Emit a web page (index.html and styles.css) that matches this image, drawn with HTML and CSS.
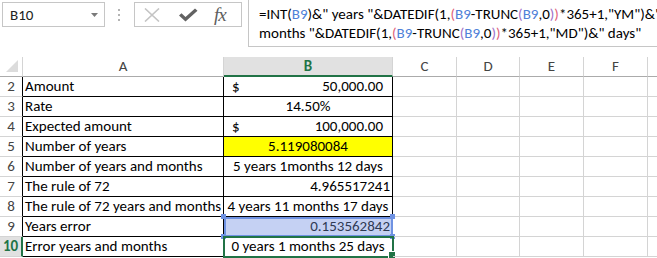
FILE: index.html
```html
<!DOCTYPE html>
<html lang="en">
<head>
    <meta charset="UTF-8">
    <title>Rule of 72</title>
    <link rel="stylesheet" href="styles.css">
</head>
<body>
    <!-- Name box, formula buttons and formula bar -->
    <div class="toolbar">
        <div class="namebox">
            <span>B10</span>
            <svg class="caret" width="7" height="4" viewBox="0 0 7 4"><path d="M0 0h7L3.5 4z" fill="#7a7a7a"/></svg>
        </div>
        <svg class="grip" width="3" height="13" viewBox="0 0 3 13">
            <rect x="0" y="0" width="2" height="2" fill="#b4b4b4"/>
            <rect x="0" y="5" width="2" height="2" fill="#b4b4b4"/>
            <rect x="0" y="10" width="2" height="2" fill="#b4b4b4"/>
        </svg>
        <div class="fxbox">
            <svg class="icon-x" width="16" height="14" viewBox="0 0 16 14"><path d="M1 0.5L15 13.5M15 0.5L1 13.5" stroke="#c4c4c4" stroke-width="1.6" fill="none"/></svg>
            <svg class="icon-check" width="20" height="14" viewBox="0 0 20 14"><path d="M1 7.5L3.5 5.2L7.5 9L17 0.5L19.5 2.8L7.5 13.5z" fill="#626262"/></svg>
            <span class="fx">fx</span>
        </div>
        <div class="formula">
            <div>=INT(<span class="ref">B9</span>)&amp;" years "&amp;DATEDIF(1,<span class="p1">(</span><span class="ref">B9</span>-TRUNC<span class="p2">(</span><span class="ref">B9</span>,0<span class="p2">)</span><span class="p1">)</span>*365+1,"YM")&amp;"</div>
            <div>months "&amp;DATEDIF(1,<span class="p1">(</span><span class="ref">B9</span>-TRUNC<span class="p2">(</span><span class="ref">B9</span>,0<span class="p2">)</span><span class="p1">)</span>*365+1,"MD")&amp;" days"</div>
        </div>
    </div>

    <!-- Worksheet -->
    <div class="sheet">
        <div class="corner"><svg width="12" height="12" viewBox="0 0 12 12"><path d="M12 0V12H0z" fill="#dcdcdc"/></svg></div>
        <div class="colhead">A</div>
        <div class="colhead col-active">B</div>
        <div class="colhead">C</div>
        <div class="colhead">D</div>
        <div class="colhead">E</div>
        <div class="colhead">F</div>
        <div class="colhead last"></div>

        <div class="rowhead">2</div>
        <div class="cell label">Amount</div>
        <div class="cell value acct"><span>$</span><span>50,000.00</span></div>
        <div class="cell"></div><div class="cell"></div><div class="cell"></div><div class="cell"></div><div class="cell last"></div>

        <div class="rowhead">3</div>
        <div class="cell label">Rate</div>
        <div class="cell value center">14.50%</div>
        <div class="cell"></div><div class="cell"></div><div class="cell"></div><div class="cell"></div><div class="cell last"></div>

        <div class="rowhead">4</div>
        <div class="cell label">Expected amount</div>
        <div class="cell value acct"><span>$</span><span>100,000.00</span></div>
        <div class="cell"></div><div class="cell"></div><div class="cell"></div><div class="cell"></div><div class="cell last"></div>

        <div class="rowhead">5</div>
        <div class="cell label">Number of years</div>
        <div class="cell value center yellow">5.119080084</div>
        <div class="cell"></div><div class="cell"></div><div class="cell"></div><div class="cell"></div><div class="cell last"></div>

        <div class="rowhead">6</div>
        <div class="cell label">Number of years and months</div>
        <div class="cell value center">5 years 1months 12 days</div>
        <div class="cell"></div><div class="cell"></div><div class="cell"></div><div class="cell"></div><div class="cell last"></div>

        <div class="rowhead">7</div>
        <div class="cell label">The rule of 72</div>
        <div class="cell value right">4.965517241</div>
        <div class="cell"></div><div class="cell"></div><div class="cell"></div><div class="cell"></div><div class="cell last"></div>

        <div class="rowhead">8</div>
        <div class="cell label">The rule of 72 years and months</div>
        <div class="cell value center">4 years 11 months 17 days</div>
        <div class="cell"></div><div class="cell"></div><div class="cell"></div><div class="cell"></div><div class="cell last"></div>

        <div class="rowhead">9</div>
        <div class="cell label">Years error</div>
        <div class="cell value right referenced">0.153562842
            <i class="handle h-tl"></i><i class="handle h-tr"></i><i class="handle h-bl"></i><i class="handle h-br"></i>
        </div>
        <div class="cell"></div><div class="cell"></div><div class="cell"></div><div class="cell"></div><div class="cell last"></div>

        <div class="rowhead row-active">10</div>
        <div class="cell label">Error years and months</div>
        <div class="cell value center active">0 years 1 months 25 days<i class="fill-handle"></i></div>
        <div class="cell"></div><div class="cell"></div><div class="cell"></div><div class="cell"></div><div class="cell last"></div>
    </div>
</body>
</html>
```

FILE: styles.css
```css
body {
    margin: 0;
    width: 657px;
    height: 258px;
    overflow: hidden;
    background-color: white;
    font-family: Carlito, Lato, "Liberation Sans", sans-serif;
    font-size: 15px;
    color: black;
}

/* Top bar */
.toolbar {
    display: flex;
    align-items: flex-start;
    height: 47px;
    margin-bottom: 10px;
}

.namebox {
    box-sizing: border-box;
    width: 103px;
    height: 25px;
    margin: 2px 0 0 2px;
    border: 1px solid #c6c6c6;
    display: flex;
    align-items: center;
    justify-content: space-between;
    padding: 0 6px 0 7px;
    color: #222;
}

.caret {
    margin-top: 1px;
}

.grip {
    margin: 9px 0 0 13px;
}

.fxbox {
    box-sizing: border-box;
    width: 108px;
    height: 25px;
    margin: 2px 0 0 13px;
    border: 1px solid #c6c6c6;
    display: flex;
    align-items: center;
    padding: 0 0 0 9px;
}

.icon-check {
    margin-left: 18px;
}

.fx {
    margin-left: 16px;
    font-family: "Liberation Serif", "DejaVu Serif", serif;
    font-style: italic;
    font-size: 19px;
    color: #5e5e5e;
    letter-spacing: -1px;
}

.formula {
    box-sizing: border-box;
    flex: 1;
    height: 47px;
    margin-left: 6px;
    border-left: 1px solid #c6c6c6;
    border-bottom: 1px solid #c6c6c6;
    padding: 5px 0 0 10px;
    line-height: 19px;
    white-space: nowrap;
    overflow: hidden;
}

.ref {
    color: #4f81d8;
}

.p1 {
    color: #e0607a;
}

.p2 {
    color: #a070c8;
}

/* Worksheet grid */
.sheet {
    display: grid;
    grid-template-columns: 23px 201px 169px 64px 63px 64px 64px 1fr;
    grid-template-rows: repeat(10, 20px);
}

.sheet > div {
    box-sizing: border-box;
    border-right: 1px solid #d4d4d4;
    border-bottom: 1px solid #d4d4d4;
    line-height: 19px;
    white-space: nowrap;
}

.sheet > .last {
    border-right: none;
}

.corner {
    display: flex;
    align-items: flex-end;
    justify-content: flex-end;
    padding: 0 4px 4px 0;
    border-bottom-color: #ababab !important;
}

.corner svg {
    display: block;
}

.colhead {
    text-align: center;
    color: #444;
    border-bottom-color: #ababab !important;
}

.col-active {
    background-color: #e1e1e1;
    color: #217346;
    font-weight: bold;
    border-bottom: 2px solid #217346 !important;
}

.rowhead {
    text-align: center;
    color: #444;
    border-right-color: black !important;
}

.row-active {
    background-color: #e1e1e1;
    color: #217346;
    font-weight: bold;
    border-right: 2px solid #217346 !important;
}

.cell {
    position: relative;
}

.label {
    padding-left: 2px;
    border-right-color: black !important;
    border-bottom-color: black !important;
}

.value {
    padding: 0 2px;
    border-right-color: black !important;
    border-bottom-color: black !important;
}

.acct {
    display: flex;
    justify-content: space-between;
    padding: 0 9px 0 8px;
}

.center {
    text-align: center;
}

.right {
    text-align: right;
}

.yellow {
    background-color: #ffff00;
}

.referenced {
    background-color: #c5d1f3;
    color: #2f3a55;
    outline: 2px solid #6f92e2;
    outline-offset: -2px;
}

.handle {
    position: absolute;
    width: 5px;
    height: 5px;
    background-color: #6f92e2;
}

.h-tl { left: -3px; top: -3px; }
.h-tr { right: -3px; top: -3px; }
.h-bl { left: -3px; bottom: -3px; }
.h-br { right: -3px; bottom: -3px; }

.active {
    outline: 2px solid #217346;
    outline-offset: -1px;
}

.fill-handle {
    position: absolute;
    right: -4px;
    bottom: -3px;
    width: 6px;
    height: 6px;
    background-color: #217346;
    border: 1px solid white;
}
```
